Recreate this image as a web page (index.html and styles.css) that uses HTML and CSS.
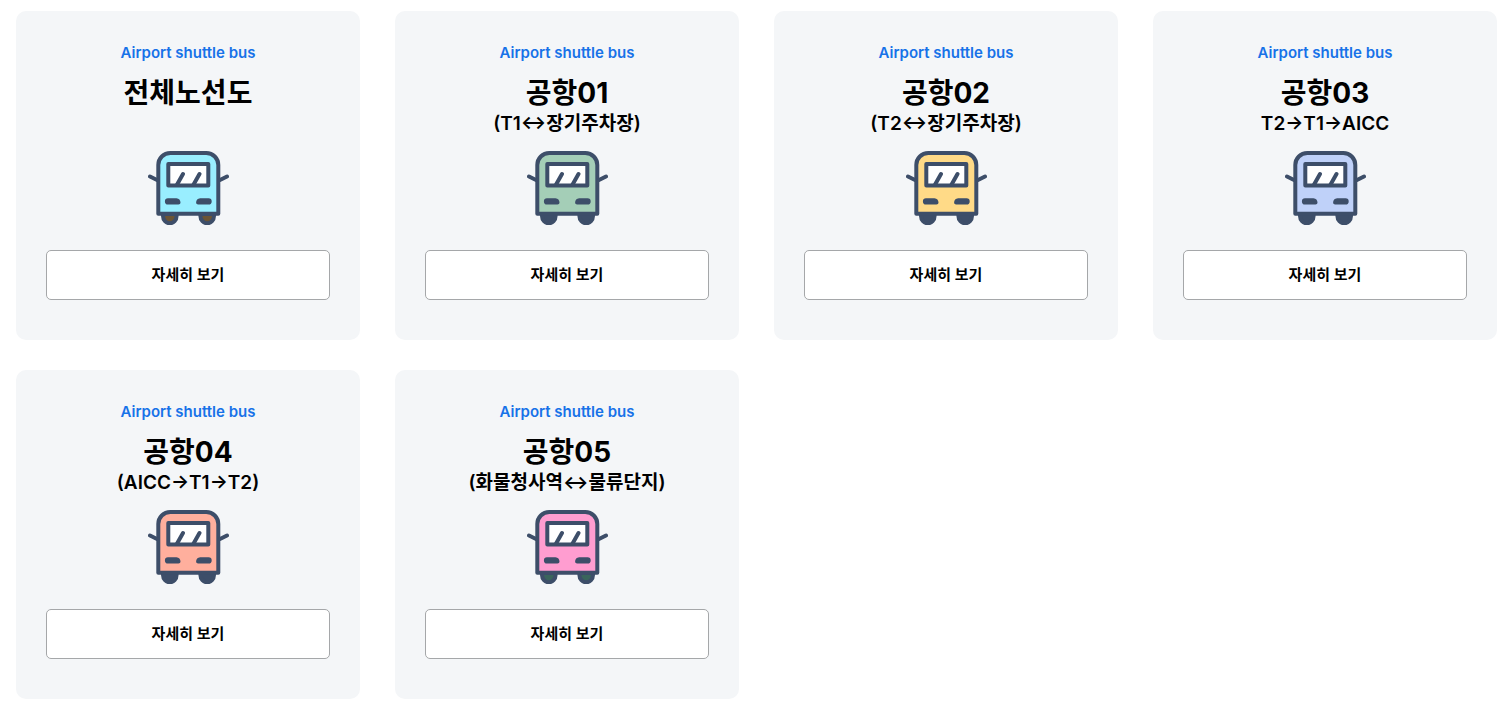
FILE: index.html
```
<!DOCTYPE html>
<html lang="ko">
<head>
<meta charset="utf-8">
<title>Airport shuttle bus</title>
<link rel="stylesheet" href="styles.css">
</head>
<body>
<svg class="sprite" aria-hidden="true">
  <symbol id="bus" viewBox="0 0 81 75">
    <g class="bus-wheel">
      <path d="M15 64v2a6.800 7.300 0 0 0 13.600 0V64z"/>
      <path d="M52.400 64v2a6.800 7.300 0 0 0 13.600 0V64z"/>
    </g>
    <path class="bus-body" d="M10.300 63.800V15a12 12 0 0 1 12-12h36a12 12 0 0 1 12 12v48.800z"/>
    <path class="bus-glass" d="M20.300 14h40v21.500h-40z"/>
    <path class="bus-line" d="M28.800 35l6.200-11M45.300 35l6.200-11M2 26.500l7 3.500M79 26.500l-7 3.500"/>
    <path class="bus-light" d="M20 48.300h8.500c2.500 0 4 2.200 4 4.200 0 1.200-.8 2-2 2H20a3.100 3.100 0 0 1 0-6.200zM60.600 48.300h-8.500c-2.500 0-4 2.200-4 4.200 0 1.200.8 2 2 2h10.500a3.100 3.100 0 0 0 0-6.200z"/>
  </symbol>
</svg>
<main class="routes">
  <section class="card">
    <p class="label">Airport shuttle bus</p>
    <div class="heading"><h2 class="title">전체노선도</h2></div>
    <svg class="bus cyan" aria-hidden="true"><use href="#bus"/></svg>
    <button class="more" type="button">자세히 보기</button>
  </section>
  <section class="card">
    <p class="label">Airport shuttle bus</p>
    <div class="heading"><h2 class="title">공항01</h2><p class="stops">(T1↔장기주차장)</p></div>
    <svg class="bus green" aria-hidden="true"><use href="#bus"/></svg>
    <button class="more" type="button">자세히 보기</button>
  </section>
  <section class="card">
    <p class="label">Airport shuttle bus</p>
    <div class="heading"><h2 class="title">공항02</h2><p class="stops">(T2↔장기주차장)</p></div>
    <svg class="bus yellow" aria-hidden="true"><use href="#bus"/></svg>
    <button class="more" type="button">자세히 보기</button>
  </section>
  <section class="card">
    <p class="label">Airport shuttle bus</p>
    <div class="heading"><h2 class="title">공항03</h2><p class="stops">T2→T1→AICC</p></div>
    <svg class="bus blue" aria-hidden="true"><use href="#bus"/></svg>
    <button class="more" type="button">자세히 보기</button>
  </section>
  <section class="card">
    <p class="label">Airport shuttle bus</p>
    <div class="heading"><h2 class="title">공항04</h2><p class="stops">(AICC→T1→T2)</p></div>
    <svg class="bus coral" aria-hidden="true"><use href="#bus"/></svg>
    <button class="more" type="button">자세히 보기</button>
  </section>
  <section class="card">
    <p class="label">Airport shuttle bus</p>
    <div class="heading"><h2 class="title">공항05</h2><p class="stops">(화물청사역↔물류단지)</p></div>
    <svg class="bus pink" aria-hidden="true"><use href="#bus"/></svg>
    <button class="more" type="button">자세히 보기</button>
  </section>
</main>
</body>
</html>
```
FILE: styles.css
```
* { box-sizing: border-box; }
body {
  margin: 0;
  background: #fff;
  color: #000;
  font-family: Inter, "Noto Sans CJK KR", sans-serif;
}
.sprite { display: none; }
.routes {
  display: grid;
  grid-template-columns: repeat(4, 1fr);
  gap: 30px 35px;
  padding: 11px 11px 8px 16px;
}
.card {
  display: flex;
  flex-direction: column;
  align-items: center;
  padding: 30px 30px 40px;
  border-radius: 10px;
  background: #f4f6f8;
  text-align: center;
}
.label, .title, .stops { margin: 0; }
.label {
  color: #1772e8;
  font-size: 15px;
  font-weight: 600;
  line-height: 24px;
}
.heading {
  min-height: 64px;
  margin: 10px 0 11px;
}
.title {
  font-size: 28px;
  font-weight: 700;
  line-height: 36px;
}
.stops {
  font-size: 19px;
  font-weight: 600;
  line-height: 26px;
}
.bus {
  width: 81px;
  height: 75px;
  margin-bottom: 25px;
}
.bus-wheel { fill: var(--wheel, #3d4e69); stroke: #3d4e69; stroke-width: 4; }
.bus-body { fill: var(--body); stroke: #3d4e69; stroke-width: 4; stroke-linejoin: round; }
.bus-glass { fill: #fff; stroke: #3d4e69; stroke-width: 4; stroke-linejoin: round; }
.bus-line { fill: none; stroke: #3d4e69; stroke-width: 4; stroke-linecap: round; }
.bus-light { fill: #3d4e69; }
.cyan { --body: #99eeff; --wheel: #6b5535; }
.green { --body: #a4ceb7; }
.yellow { --body: #ffda87; }
.blue { --body: #bfd1f9; }
.coral { --body: #ffaf9d; }
.pink { --body: #ff9dd0; --wheel: #3a655c; }
.more {
  width: 100%;
  height: 50px;
  padding: 0 6px 4px;
  border: 1px solid #a5a7a9;
  border-radius: 5px;
  background: #fff;
  color: #000;
  font-family: inherit;
  font-size: 15px;
  font-weight: 600;
}
```
